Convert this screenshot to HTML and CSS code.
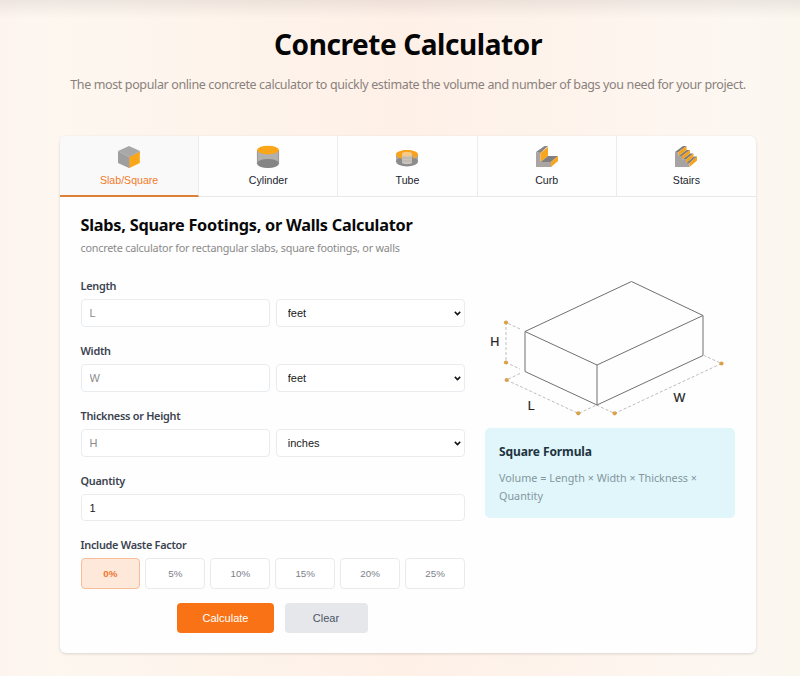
FILE: index.html
```html
<!DOCTYPE html>
<html lang="en">
<head>
<meta charset="utf-8">
<title>Concrete Calculator</title>
<link rel="stylesheet" href="styles.css">
</head>
<body>
<header class="hero">
  <h1>Concrete Calculator</h1>
  <p>The most popular online concrete calculator to quickly estimate the volume and number of bags you need for your project.</p>
</header>
<main class="card">
  <nav class="tabs">
    <button class="tab active">
      <svg width="24" height="24" viewBox="0 0 24 24"><path fill="#a8a8a8" d="M12 1 23 6 12 12 1 6Z"/><path fill="#9e9e9e" d="M1 6 12 12v11L1 18Z"/><path fill="#a8a8a8" d="M12 11.500 23 6v2l-10 5v10h-1Z"/><path fill="#faa61a" d="M12.500 12 22.800 6.700V18L12.500 23Z"/></svg>
      <span>Slab/Square</span>
    </button>
    <button class="tab">
      <svg width="24" height="24" viewBox="0 0 24 24"><path fill="#b2b0ac" d="M1 5v14h22V5Z"/><ellipse cx="12" cy="18.500" rx="11" ry="4.500" fill="#858585"/><path stroke="#8f8f8f" stroke-width=".7" d="M1.400 5v14M22.600 5v14"/><ellipse cx="12" cy="5" rx="11" ry="4.300" fill="#faa61a"/></svg>
      <span>Cylinder</span>
    </button>
    <button class="tab">
      <svg width="24" height="24" viewBox="0 0 24 24"><path fill="#aaa" d="M1 9v8h22V9Z"/><ellipse cx="12" cy="16.500" rx="11" ry="5" fill="#8b8b8b"/><path fill="#f7a31c" d="M1 9.500C1 3.500 23 3.500 23 9.500c0 2-2 3.500-5 4.200v-4H7v4C3 13 1 11.500 1 9.500Z"/><path fill="#cbc3b9" d="M7 8h10v10c-2 1.600-8 1.600-10 0Z"/><ellipse cx="12" cy="9" rx="5" ry="2.300" fill="#f8c885"/><path stroke="#aaa" stroke-width=".6" d="M7 13h10M7 16h10"/></svg>
      <span>Tube</span>
    </button>
    <button class="tab">
      <svg width="24" height="24" viewBox="0 0 24 24"><path fill="#aaa4a4" d="M1 7 5.500 8v9h11v5H1Z"/><path fill="#858585" d="M1 7 9.500 1H13L5.500 8Z"/><path fill="#f9a51d" d="M5.500 8 13 2v9l-7.500 6Z"/><path fill="#808080" d="m5.500 17 7.500-6h10l-7 6Z"/><path fill="#f9a51d" d="m16 17 7-6v5l-7 6Z"/></svg>
      <span>Curb</span>
    </button>
    <button class="tab">
      <svg width="24" height="24" viewBox="0 0 24 24"><path fill="#a7a3a3" d="M1 7h3.500v4H8v3.500h4V18h3.500v4H1Z"/><path fill="#7d7d7d" d="m1 7 8-6h3.500l-8 6Zm3.500 4L12.500 5H16l-8 6ZM8 14.500l8-6h3.500l-7.500 6ZM12 18l8-6.500h3L15.500 18Z"/><path fill="#f4a11e" d="m4.500 7 8-6v4l-8 6ZM8 11l8-6v3.500l-8 6Zm4 3.500 7.500-6v3.500L12 18Zm3.500 3.500 7.500-6.500v4L15.500 22Z"/></svg>
      <span>Stairs</span>
    </button>
  </nav>
  <section class="panel">
    <h2>Slabs, Square Footings, or Walls Calculator</h2>
    <p class="lead">concrete calculator for rectangular slabs, square footings, or walls</p>
    <div class="columns">
      <form class="form">
        <label for="length">Length</label>
        <div class="pair">
          <input id="length" type="text" placeholder="L">
          <select><option>feet</option></select>
        </div>
        <label for="width">Width</label>
        <div class="pair">
          <input id="width" type="text" placeholder="W">
          <select><option>feet</option></select>
        </div>
        <label for="height">Thickness or Height</label>
        <div class="pair">
          <input id="height" type="text" placeholder="H">
          <select><option>inches</option></select>
        </div>
        <label for="quantity">Quantity</label>
        <input id="quantity" class="quantity" type="text" value="1">
        <label>Include Waste Factor</label>
        <div class="waste">
          <button type="button" class="selected">0%</button>
          <button type="button">5%</button>
          <button type="button">10%</button>
          <button type="button">15%</button>
          <button type="button">20%</button>
          <button type="button">25%</button>
        </div>
        <div class="actions">
          <button type="button" class="calculate">Calculate</button>
          <button type="button" class="clear">Clear</button>
        </div>
      </form>
      <aside class="side">
        <svg class="diagram" width="250" height="145" viewBox="485 275 250 145">
          <g fill="none" stroke="#bdbdbd" stroke-dasharray="3 2">
            <path d="M520 329 506 322.500V362.500L520 369M520 373.500 506.500 380 578.500 413.500 596.500 405M596.500 405 614.500 413.500 721.500 363.500 704 355.500"/>
          </g>
          <path fill="none" stroke="#707070" stroke-linejoin="round" d="M631.500 281.500 703 315.500V355.500L597 405 525 371.500V331.500ZM525 331.500 597 365 703 315.500M597 365V405"/>
          <g fill="#dca04b"><circle cx="506" cy="322.500" r="2.100"/><circle cx="506" cy="362.500" r="2.100"/><circle cx="506.700" cy="380" r="2.100"/><circle cx="578.300" cy="413.300" r="2.100"/><circle cx="614.700" cy="413.300" r="2.100"/><circle cx="721.500" cy="363.500" r="2.100"/></g>
          <g class="dims"><text x="490.300" y="346">H</text><text x="527.800" y="410">L</text><text x="673.500" y="401.500">W</text></g>
        </svg>
        <div class="formula">
          <h3>Square Formula</h3>
          <p>Volume = Length × Width × Thickness × Quantity</p>
        </div>
      </aside>
    </div>
  </section>
</main>
</body>
</html>
```
FILE: styles.css
```css
* { box-sizing: border-box; }
body {
  margin: 0;
  height: 676px;
  overflow: hidden;
  font-family: "Noto Sans", sans-serif;
  background:
    linear-gradient(180deg, rgba(90, 80, 80, .1), rgba(90, 80, 80, 0) 18px),
    linear-gradient(90deg, #fef4ef 0, #fdf7f0 55px, #fef0e7 400px, #fdf7f1 730px, #faf7ef 800px);
}
button, input, select { font-family: "Liberation Sans", Arial, sans-serif; }
h1, h2, h3, p { margin: 0; }
.hero { height: 136px; padding: 24px 0 0 16px; text-align: center; }
h1 { font-size: 28px; line-height: 40px; font-weight: 700; letter-spacing: -.42px; color: #050505; }
.hero p { margin-top: 11px; font-size: 12.500px; line-height: 20px; letter-spacing: -.37px; color: #8a817d; white-space: nowrap; }
.card {
  width: 696px;
  height: 517px;
  margin-left: 60px;
  background: #fefefe;
  border-radius: 6px;
  box-shadow: 0 1px 3px rgba(0, 0, 0, .14);
  overflow: hidden;
}
.tabs { display: grid; grid-template-columns: repeat(5, 1fr); height: 61px; border-bottom: 1px solid #e9e9ea; }
.tab {
  height: 60px;
  border: 0;
  border-right: 1px solid #ececee;
  background: transparent;
  padding: 9px 0 0;
  display: flex;
  flex-direction: column;
  align-items: center;
  gap: 4px;
  font-size: 10.600px;
  line-height: 14px;
  color: #20242c;
}
.tab:last-child { border-right: 0; }
.tab.active { height: 61px; background: #f9f9f9; color: #f27a2a; border-bottom: 2px solid #dd8139; }
.panel { padding: 17px 21px 0 20.500px; }
h2 { font-size: 16.300px; line-height: 22px; font-weight: 700; letter-spacing: -.25px; color: #090909; }
.lead { margin-top: 3px; font-size: 10.800px; line-height: 17px; letter-spacing: -.22px; color: #8a8a8a; }
.columns { display: grid; grid-template-columns: 384.500px 250px; gap: 20px; }
.form { padding-top: 22px; }
label { display: block; height: 21px; font-size: 10.900px; line-height: 15px; font-weight: 600; letter-spacing: -.28px; color: #3c4350; }
.pair { display: grid; grid-template-columns: 1fr 1fr; gap: 6px; margin-bottom: 16px; }
input, select {
  width: 100%;
  height: 28px;
  border: 1px solid #e9ecef;
  border-radius: 4px;
  background: #fff;
  padding: 0 8px;
  font-size: 11px;
  color: #181818;
}
select {
  appearance: none;
  padding: 0 0 0 11px;
  background: #fff url("data:image/svg+xml,%3Csvg xmlns='http://www.w3.org/2000/svg' width='7' height='5'%3E%3Cpath d='M.8.9 3.500 3.600 6.200.9' fill='none' stroke='%23111' stroke-width='1.500'/%3E%3C/svg%3E") no-repeat right 3px center;
}
input::placeholder { color: #8b8b8b; }
.quantity { display: block; height: 27px; margin-bottom: 16px; }
.waste { display: grid; grid-template-columns: repeat(6, 1fr); gap: 5px; }
.waste button {
  height: 31px;
  border: 1px solid #e9eaed;
  border-radius: 4px;
  background: #fff;
  padding: 0;
  font-size: 9.800px;
  color: #7b808a;
}
.waste .selected { background: #fde8da; border-color: #f7bd98; color: #f1762c; font-weight: 700; }
.actions { display: flex; gap: 10.500px; margin: 14px 0 0 96.500px; }
.actions button { height: 30px; border: 0; border-radius: 4px; font-size: 11px; }
.actions .calculate { width: 97px; background: #f97316; color: #fff; }
.actions .clear { width: 83px; background: #e5e7eb; color: #4b5563; }
.side { padding-top: 19px; }
.diagram { display: block; }
.dims { font-family: "Liberation Sans", Arial, sans-serif; font-size: 12.500px; fill: #222; stroke: #222; stroke-width: .2px; }
.formula { margin-top: 8px; height: 90px; padding: 14px; border-radius: 5px; background: #e0f6fa; }
h3 { font-size: 12px; line-height: 20px; letter-spacing: -.1px; color: #1e3440; }
.formula p { margin-top: 7px; font-size: 10.800px; line-height: 18px; color: #84979e; }
```
